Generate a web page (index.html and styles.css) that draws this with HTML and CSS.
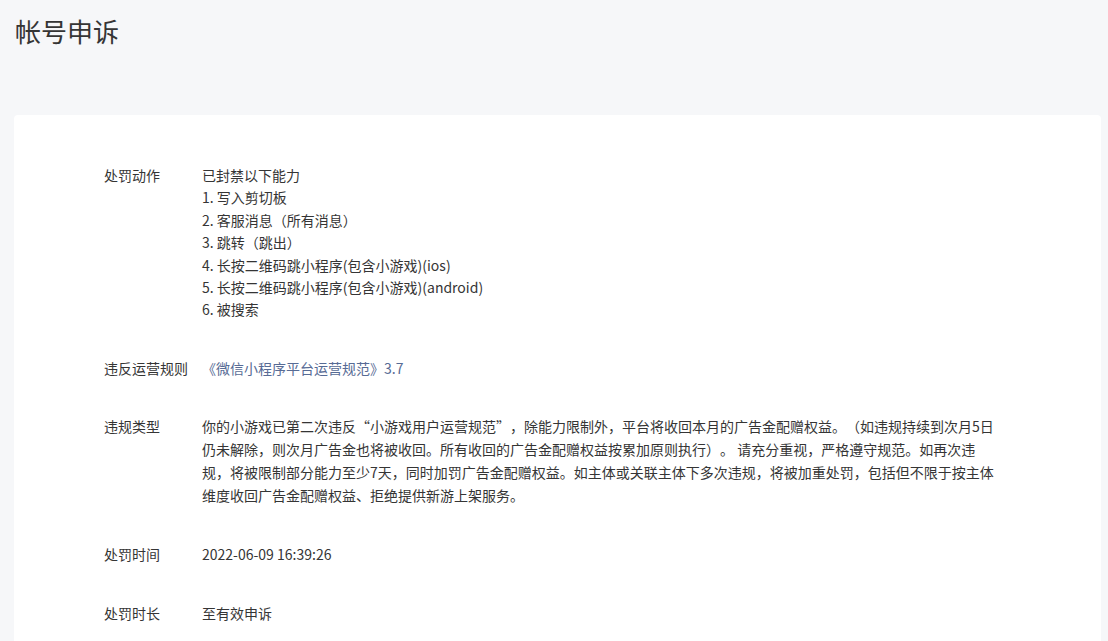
FILE: index.html
```html
<!DOCTYPE html>
<html lang="zh-CN">
<head>
<meta charset="utf-8">
<title>帐号申诉</title>
<link rel="stylesheet" href="styles.css">
</head>
<body>
<div class="page">
  <h1 class="page-title">帐号申诉</h1>
  <div class="card">
    <div class="row">
      <div class="label">处罚动作</div>
      <div class="value">
        <div>已封禁以下能力</div>
        <div>1. 写入剪切板</div>
        <div>2. 客服消息（所有消息）</div>
        <div>3. 跳转（跳出）</div>
        <div>4. 长按二维码跳小程序(包含小游戏)(ios)</div>
        <div>5. 长按二维码跳小程序(包含小游戏)(android)</div>
        <div>6. 被搜索</div>
      </div>
    </div>
    <div class="row">
      <div class="label">违反运营规则</div>
      <div class="value"><a class="link" href="#">《微信小程序平台运营规范》3.7</a></div>
    </div>
    <div class="row">
      <div class="label">违规类型</div>
      <div class="value text">你的小游戏已第二次违反<span class="q q-open">“</span>小游戏用户运营规范<span class="q q-close">”</span>，除能力限制外，平台将收回本月的广告金配赠权益。（如违规持续到次月5日仍未解除，则次月广告金也将被收回。所有收回的广告金配赠权益按累加原则执行）。 请充分重视，严格遵守规范。如再次违规，将被限制部分能力至少7天，同时加罚广告金配赠权益。如主体或关联主体下多次违规，将被加重处罚，包括但不限于按主体维度收回广告金配赠权益、拒绝提供新游上架服务。</div>
    </div>
    <div class="row">
      <div class="label">处罚时间</div>
      <div class="value">2022-06-09 16:39:26</div>
    </div>
    <div class="row">
      <div class="label">处罚时长</div>
      <div class="value">至有效申诉</div>
    </div>
  </div>
</div>
</body>
</html>
```
FILE: styles.css
```css
html, body {
  margin: 0;
  padding: 0;
  background: #f6f7f9;
}
body {
  font-family: "Noto Sans CJK SC", "Noto Sans", sans-serif;
  color: #353535;
  font-size: 14px;
  line-height: 1.6;
  text-spacing-trim: space-all;
}
.page {
  padding: 0 7px 0 14px;
}
.page-title {
  margin: 0;
  padding: 11px 0 0 1px;
  height: 115px;
  box-sizing: border-box;
  font-size: 26px;
  font-weight: normal;
  line-height: 40px;
  color: #353535;
}
.card {
  background: #fff;
  border-radius: 4px;
  padding: 31px 90px 40px 90px;
}
.row {
  display: flex;
  padding: 18px 0;
}
.label {
  width: 98px;
  flex: none;
}
.value {
  width: 800px;
}
.text {
  line-height: 23px;
}
.q {
  display: inline-block;
  width: 1em;
}
.q-open {
  text-align: right;
}
.q-close {
  text-align: left;
}
.link {
  color: #576b95;
  text-decoration: none;
}
```
